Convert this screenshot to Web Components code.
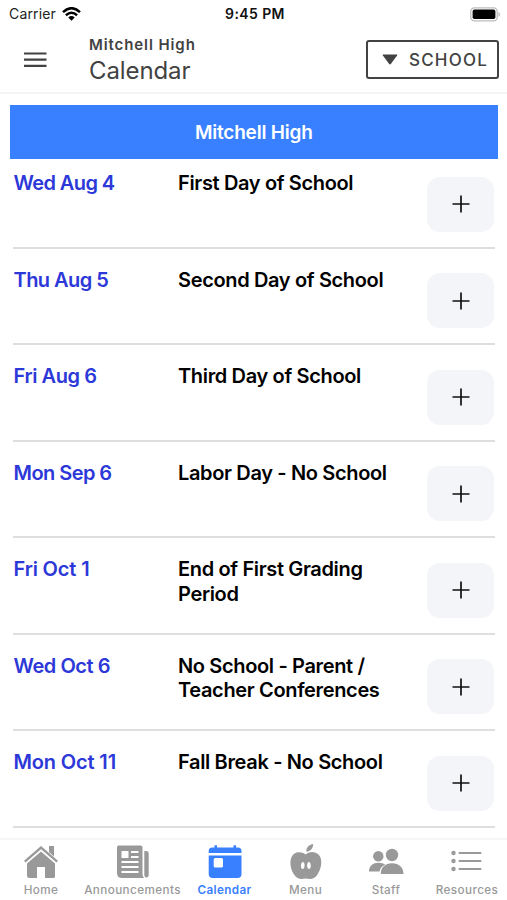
<!DOCTYPE html>
<html lang="en">
<head>
<meta charset="utf-8">
<title>Mitchell High Calendar</title>
<style>
html,body{margin:0;height:100%}
body{background:#fff;overflow:hidden;font-family:Inter,"Liberation Sans",sans-serif;color:#000}
</style>
</head>
<body>
<school-app></school-app>
<script>
class Base extends HTMLElement{
  connectedCallback(){
    if(this.shadowRoot) return;
    const t=document.createElement('template');
    t.innerHTML=this.view();
    this.attachShadow({mode:'open'}).append(t.content.cloneNode(true));
  }
}
customElements.define('status-bar',class extends Base{view(){return `
<style>
:host{display:grid;grid-template-columns:1fr auto 1fr;align-items:center;height:28px;box-sizing:border-box;padding:0 6px 0 9px}
.l{display:flex;align-items:center;gap:6px;font-size:14px;line-height:20px;color:#222;letter-spacing:.15px}
.t{font-size:14px;font-weight:600;line-height:20px;color:#111;letter-spacing:.4px}
.r{display:flex;justify-content:flex-end}
svg{display:block}
</style>
<div class="l"><span>Carrier</span><svg width="19" height="14" viewBox="0 0 19 14"><g fill="none" stroke="#000" stroke-width="2.5"><path d="M1 5.1Q9.500-2.700 18 5.100"/><path d="M3.900 8.200Q9.500 3.200 15.100 8.200"/></g><path d="M6.300 10.500Q9.500 7.700 12.700 10.500L9.500 13.700Z"/></svg></div>
<div class="t">9:45 PM</div>
<div class="r"><svg width="31" height="15" viewBox="0 0 31 15"><rect x=".8" y=".8" width="26.400" height="13" rx="3.600" fill="#fff" stroke="#bdbdbd" stroke-width="1.300"/><rect x="2.600" y="2.600" width="22.800" height="9.400" rx="1.800"/><path d="M28.500 5c2 .8 2 4 0 4.800z" fill="#bdbdbd"/></svg></div>`}});

customElements.define('page-header',class extends Base{view(){return `
<style>
:host{display:flex;align-items:flex-start;box-sizing:border-box;height:66px;border-bottom:2px solid #f4f4f4;padding:0 8px 0 24px;color:#424242}
.m{margin-top:23px;width:65px}
svg{display:block}
.h{flex:1}
.s{font-size:15px;font-weight:600;line-height:20px;margin-top:7px;letter-spacing:.9px}
.c{font-size:24px;line-height:30px;margin-top:1px;letter-spacing:-.1px;font-weight:400}
.b{display:flex;align-items:center;gap:11px;box-sizing:border-box;width:133px;height:39px;margin-top:12px;border:2px solid #424242;border-radius:3px;padding-left:14px;font-size:17px;letter-spacing:1.200px;font-weight:450}
</style>
<svg class="m" viewBox="0 0 65 17" height="17"><path d="M0 2.500H22.500M0 8.700H22.500M0 14.900H22.500" stroke="#424242" stroke-width="2.200"/></svg>
<div class="h"><div class="s">Mitchell High</div><div class="c">Calendar</div></div>
<div class="b"><svg width="16" height="11" viewBox="0 0 16 11"><path d="M1.200 .5H14.800Q15.800 .5 15.100 1.500L9 9.800Q8 11 7 9.800L.9 1.500Q.2 .5 1.200 .5Z" fill="#424242"/></svg><span>SCHOOL</span></div>`}});

customElements.define('section-banner',class extends Base{view(){return `
<style>:host{display:flex;align-items:center;justify-content:center;height:54px;margin:11px 9px 0 9.500px;background:#3880ff;color:#fff;font-size:19px;font-weight:600;letter-spacing:-.2px}</style><slot></slot>`}});

customElements.define('event-row',class extends Base{view(){return `
<style>
:host{display:flex;box-sizing:border-box;height:96.500px;padding-top:7px;margin:0 12px 0 13px;border-bottom:2px solid #dedede;font-size:20px;line-height:24.500px;font-weight:620;letter-spacing:-.35px}
:host([first]){height:89.500px;padding-top:0}
.d{width:164.500px;color:#2c38d8;padding-top:12px;margin-left:.5px;letter-spacing:var(--date-spacing)}
.t{flex:1;padding-top:12px;white-space:pre-line}
.b{width:67px;height:55px;margin:17.500px 1px 0 0;border-radius:13px;background:#f4f5f8;display:flex;align-items:center;justify-content:center}
</style>
<div class="d"><slot name="date"></slot></div><div class="t"><slot></slot></div>
<div class="b"><svg width="18" height="18" viewBox="0 0 18 18"><path d="M9 .5V17.500M.5 9H17.500" stroke="#111" stroke-width="1.700"/></svg></div>`}});

customElements.define('tab-item',class extends Base{view(){return `
<style>
:host{display:flex;flex-direction:column;align-items:center;width:var(--tab-width,80px);color:#999}
:host([active]){color:#3880ff}
.i{height:38px;margin-top:3px;display:flex;align-items:center}
.l{font-size:11.700px;line-height:16px;font-weight:500;letter-spacing:.4px;white-space:nowrap;margin-top:1px}
:host([active]) .l{font-weight:600;letter-spacing:.35px}
</style>
<div class="i"><slot name="icon"></slot></div><div class="l"><slot></slot></div>`}});

const icons={
Home:`<path d="M4 20.500L18 8.500L32 20.500V33.500Q32 35 30.500 35H22V24H14V35H6.500Q4 35 4 33Z"/><path d="M1.800 18.600L18 4.600L34.200 18.600" fill="none" stroke="currentColor" stroke-width="2.300"/><path d="M26 3H31V13.500L26 9Z"/>`,
Announcements:`<path fill-rule="evenodd" d="M3.500 2.500H25.500Q27.500 2.500 27.500 4.500V31Q27.500 33.500 29 35H7Q2 35 2 30V4.500Q2 2.500 3.500 2.500ZM6.500 8V15H13.500V8ZM16 8V10H23.500V8ZM16 13V15H23.500V13ZM6.500 18V20H23.500V18ZM6.500 23V25H23.500V23ZM6.500 28V30H23.500V28Z"/><path d="M29.300 8H31.500Q33.700 8 33.700 10.500V31.500Q33.700 34.500 31.500 34.500Q29.300 34.500 29.300 31.500Z"/>`,
Calendar:`<path d="M1.700 10V8Q1.700 4.500 5.200 4.500H7.500V2.300H10V4.500H26.500V2.300H29V4.500H31Q34.500 4.500 34.500 8V10Z"/><path fill-rule="evenodd" d="M1.700 12.400H34.500V31Q34.500 35 30.500 35H5.700Q1.700 35 1.700 31ZM8.200 15Q6.700 15 6.700 16.500V23Q6.700 24.500 8.200 24.500H14.500Q16 24.500 16 23V16.500Q16 15 14.500 15Z"/>`,
Menu:`<path fill-rule="evenodd" d="M17.700 11.500C21 9 24 8.600 27 9.600C36 12.500 34 25 29.500 31.500C26 37 22 36 17.700 35.600C13.500 36 9.500 37 6 31.500C1.500 25 .3 12.500 8.500 9.600C12 8.600 15 9.500 17.700 11.500ZM14.900 19C12.700 19 12 26 14.900 26C17.300 25.500 17 19 14.900 19ZM20.900 19C18.700 19 18.500 25.500 20.900 26C23.800 26 23 19 20.900 19Z"/><path d="M18.200 8.600C18.300 4 21 1.800 25.200 1C25 5.600 22.500 8.400 18.200 8.600Z"/>`,
Staff:`<circle cx="10.300" cy="13.200" r="5.200"/><circle cx="24" cy="12" r="6.200"/><path d="M1 28.500C1 23 5 19.800 10.500 19.800Q15 19.800 17.200 21.500Q12.200 24 11.500 28.500Z"/><path d="M12.800 31C12.700 24.500 17 20.300 24 20.300S35.500 24.500 35.500 31Z"/>`,
Resources:`<circle cx="4.500" cy="10" r="2.200"/><circle cx="4.500" cy="18" r="2.200"/><circle cx="4.500" cy="26" r="2.200"/><path d="M10.500 10H31.500M10.500 18H31.500M10.500 26H31.500" stroke="currentColor" stroke-width="2" stroke-linecap="round"/>`};
customElements.define('tab-bar',class extends Base{view(){
const widths={Home:82,Announcements:101,Calendar:83,Menu:79,Staff:82,Resources:80};
return `
<style>:host{display:flex;box-sizing:border-box;height:62px;border-top:2px solid #f6f6f6;background:#fff}svg{display:block}</style>
${Object.keys(icons).map(n=>`<tab-item style="--tab-width:${widths[n]}px"${n==='Calendar'?' active':''}><svg slot="icon" width="36" height="38" viewBox="0 0 36 38" fill="currentColor">${icons[n]}</svg>${n}</tab-item>`).join('')}`}});

/* date, title, tracking of the date in px */
const events=[['Wed Aug 4','First Day of School',-.6],['Thu Aug 5','Second Day of School',-.55],['Fri Aug 6','Third Day of School',-.4],['Mon Sep 6','Labor Day - No School',-.55],['Fri Oct 1','End of First Grading\nPeriod',-.15],['Wed Oct 6','No School - Parent /\nTeacher Conferences',-.45],['Mon Oct 11','Fall Break - No School',-.15]];
customElements.define('school-app',class extends Base{view(){return `
<style>:host{display:flex;flex-direction:column;height:900px}main{flex:1;min-height:0;overflow:hidden}</style>
<status-bar></status-bar><page-header></page-header>
<main><section-banner>Mitchell High</section-banner>${events.map((e,i)=>`<event-row${i?'':' first'} style="--date-spacing:${e[2]}px"><span slot="date">${e[0]}</span>${e[1]}</event-row>`).join('')}</main>
<tab-bar></tab-bar>`}});
</script>
</body>
</html>
